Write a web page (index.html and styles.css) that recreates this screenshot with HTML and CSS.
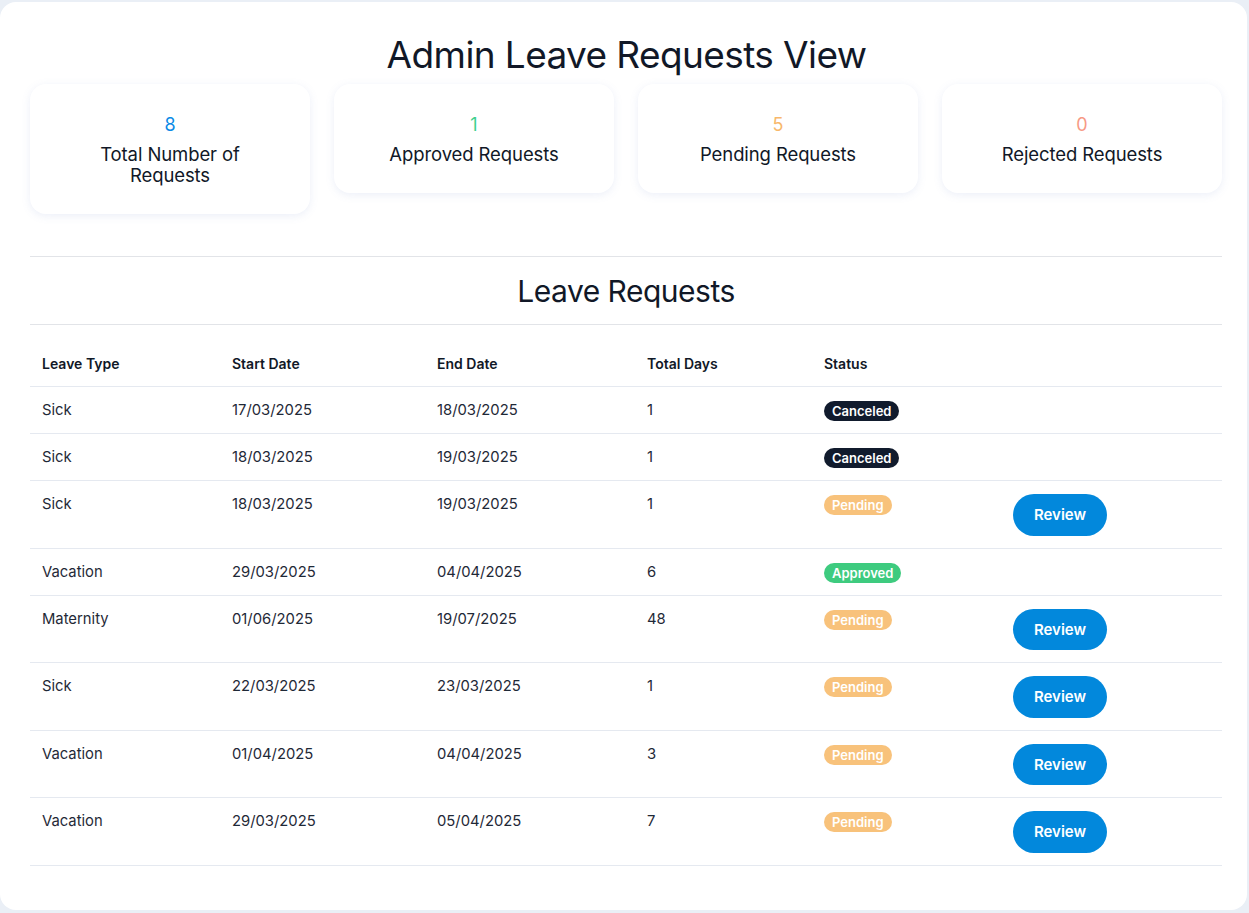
FILE: index.html
```html
<!DOCTYPE html>
<html lang="en">
<head>
<meta charset="utf-8">
<title>Admin Leave Requests View</title>
<link rel="stylesheet" href="styles.css">
</head>
<body>
<main class="panel">
  <h1 class="page-title">Admin Leave Requests View</h1>
  <section class="stats">
    <div class="stat"><div class="stat-num num-blue">8</div><div class="stat-label">Total Number of<br>Requests</div></div>
    <div class="stat"><div class="stat-num num-green">1</div><div class="stat-label">Approved Requests</div></div>
    <div class="stat"><div class="stat-num num-orange">5</div><div class="stat-label">Pending Requests</div></div>
    <div class="stat"><div class="stat-num num-red">0</div><div class="stat-label">Rejected Requests</div></div>
  </section>
  <section class="requests">
    <h2 class="section-title">Leave Requests</h2>
    <table class="table">
      <colgroup>
        <col class="c1"><col class="c2"><col class="c3"><col class="c4"><col class="c5"><col class="c6">
      </colgroup>
      <thead>
        <tr><th>Leave Type</th><th>Start Date</th><th>End Date</th><th>Total Days</th><th>Status</th><th></th></tr>
      </thead>
      <tbody>
        <tr><td>Sick</td><td>17/03/2025</td><td>18/03/2025</td><td>1</td><td><span class="badge b-canceled">Canceled</span></td><td></td></tr>
        <tr><td>Sick</td><td>18/03/2025</td><td>19/03/2025</td><td>1</td><td><span class="badge b-canceled">Canceled</span></td><td></td></tr>
        <tr><td>Sick</td><td>18/03/2025</td><td>19/03/2025</td><td>1</td><td><span class="badge b-pending">Pending</span></td><td><button class="review">Review</button></td></tr>
        <tr><td>Vacation</td><td>29/03/2025</td><td>04/04/2025</td><td>6</td><td><span class="badge b-approved">Approved</span></td><td></td></tr>
        <tr><td>Maternity</td><td>01/06/2025</td><td>19/07/2025</td><td>48</td><td><span class="badge b-pending">Pending</span></td><td><button class="review">Review</button></td></tr>
        <tr><td>Sick</td><td>22/03/2025</td><td>23/03/2025</td><td>1</td><td><span class="badge b-pending">Pending</span></td><td><button class="review">Review</button></td></tr>
        <tr><td>Vacation</td><td>01/04/2025</td><td>04/04/2025</td><td>3</td><td><span class="badge b-pending">Pending</span></td><td><button class="review">Review</button></td></tr>
        <tr><td>Vacation</td><td>29/03/2025</td><td>05/04/2025</td><td>7</td><td><span class="badge b-pending">Pending</span></td><td><button class="review">Review</button></td></tr>
      </tbody>
    </table>
  </section>
</main>
</body>
</html>
```
FILE: styles.css
```css
* { box-sizing: border-box; }
html, body { margin: 0; padding: 0; }
body {
  background: #eaeff6;
  font-family: Inter, "Noto Sans", sans-serif;
  color: #111827;
  padding: 2px 2px 3px 0;
}
.panel {
  background: #ffffff;
  border-radius: 16px;
  height: 908px;
  padding: 31px 25px 0 30px;
}
.page-title {
  margin: 0;
  text-align: center;
  font-size: 37px;
  line-height: 44px;
  font-weight: 400;
  letter-spacing: -0.6px;
  color: #111827;
  padding-left: 1px;
}
.stats {
  display: flex;
  align-items: flex-start;
  gap: 24px;
  margin-top: 7px;
}
.stat {
  width: 280px;
  flex: none;
  background: #fff;
  border-radius: 16px;
  box-shadow: 0 2px 8px rgba(110, 130, 200, 0.13);
  padding: 29px 20px 28px;
  text-align: center;
}
.stat-num {
  font-size: 18px;
  line-height: 24px;
}
.stat-label {
  margin-top: 7px;
  font-size: 18.5px;
  line-height: 21px;
  color: #111827;
  letter-spacing: -0.1px;
}
.num-blue { color: #0b8ae6; }
.num-green { color: #3ecf8e; }
.num-orange { color: #f8b86b; }
.num-red { color: #f79a85; }

.requests {
  margin-top: 42px;
  border-top: 1px solid #e2e4e8;
}
.section-title {
  margin: 0;
  text-align: center;
  font-size: 30px;
  line-height: 36px;
  font-weight: 400;
  letter-spacing: -0.5px;
  padding: 16px 0 15px;
  border-bottom: 1px solid #e2e4e8;
}
.table {
  width: 100%;
  margin-top: 16px;
  border-collapse: collapse;
  table-layout: fixed;
  font-size: 14.8px;
}
.c1 { width: 190px; }
.c2 { width: 205px; }
.c3 { width: 210px; }
.c4 { width: 177px; }
.c5 { width: 189px; }
.table th, .table td {
  text-align: left;
  padding: 12px;
  line-height: 22px;
  vertical-align: top;
  border-bottom: 1px solid #e5e9f0;
}
.table thead th {
  padding-bottom: 11px;
}
.table th {
  font-weight: 600;
  color: #111827;
  font-size: 14px;
}
.table td {
  color: #1f2937;
}
.badge {
  display: inline-block;
  font-size: 13px;
  line-height: 20px;
  font-weight: 600;
  padding: 0 8px;
  border-radius: 10px;
  color: #fff;
  vertical-align: top;
  margin-top: 2px;
}
.b-canceled { background: #111b2d; }
.b-pending { background: #f8c27b; }
.b-approved { background: #3ecb7f; }
.review {
  display: block;
  margin-top: 1px;
  height: 41.5px;
  width: 94px;
  border: none;
  border-radius: 21px;
  background: #0288dc;
  color: #fff;
  font-family: inherit;
  font-size: 15px;
  font-weight: 600;
  cursor: pointer;
}
```
